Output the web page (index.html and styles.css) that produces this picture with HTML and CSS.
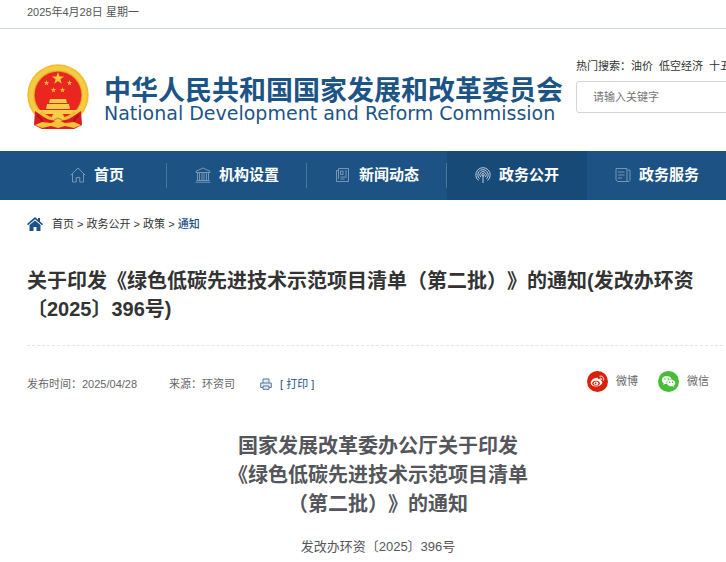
FILE: index.html
```html
<!DOCTYPE html>
<html lang="zh-CN">
<head>
<meta charset="utf-8">
<meta name="viewport" content="width=device-width, initial-scale=1">
<title>通知</title>
<link rel="stylesheet" href="styles.css">
</head>
<body>
<div class="topbar">2025年4月28日 星期一</div>

<header class="header">
  <a class="logo" href="#">
    <svg class="emblem" viewBox="0 0 62 66" aria-hidden="true">
      <circle cx="31" cy="31" r="30.7" fill="#f0bd2d"/>
      <circle cx="31" cy="31" r="27" fill="none" stroke="#f5cb45" stroke-width="4"/>
      <circle cx="31" cy="31" r="24" fill="#d69a25"/>
      <circle cx="31" cy="31" r="23.3" fill="#e92720"/>
      <path d="M31 8l1.500 4.400h4.600l-3.700 2.800 1.400 4.500L31 17l-3.800 2.700 1.400-4.500-3.700-2.800h4.600z" fill="#f9ca3e"/>
      <g fill="#f5b53a">
        <path id="star" d="M19.500 16l.7 2h2.100l-1.700 1.300.6 2.100-1.700-1.200-1.700 1.200.6-2.100-1.700-1.300h2.100z"/>
        <use href="#star" x="23"/><use href="#star" x="7" y="7"/><use href="#star" x="16" y="7"/>
      </g>
      <path d="M23 35h16l1 4H22zM20 40h22l1 5H19zM11 46h40l-4 4H15z" fill="#f9cd46"/>
      <path d="M8 47l9 6 14-2 14 2 9-6 1 14-8 4H15l-8-4z" fill="#d91c20"/>
      <path d="M10 51l5 5-2 7M52 51l-5 5 2 7" fill="none" stroke="#a91119" stroke-width="1.500"/>
      <path d="M14 48c5 6 9 7 17 7s12-1 17-7" fill="none" stroke="#f2bd35" stroke-width="3"/>
      <path d="M8 61l7-3 9 1 7-3 7 3 9-1 7 3-7 3-9-2-7 2-7-2-9 2z" fill="#f3c13a"/>
      <ellipse cx="31" cy="53" rx="6" ry="4.500" fill="#f7ce4c"/>
      <path d="M27 56l4-2 4 2" fill="none" stroke="#d9982a" stroke-width="1.500"/>
    </svg>
    <span class="logo-text">
      <span class="logo-zh">中华人民共和国国家发展和改革委员会</span>
      <span class="logo-en" lang="en">National Development and Reform Commission</span>
    </span>
  </a>
  <form class="search">
    <div class="hot">
      <span>热门搜索：</span><a href="#">油价</a><a href="#">低空经济</a><a href="#">十五五</a>
    </div>
    <input class="search-input" type="text" placeholder="请输入关键字" aria-label="请输入关键字">
  </form>
</header>

<nav class="nav">
  <a class="nav-item" href="#">
    <svg class="nav-icon" viewBox="0 0 16 16"><path d="M.7 8.300L8 1l7.300 7.300M2.500 7v8h3.700v-4.500h3.600V15h3.700V7"/></svg>首页</a>
  <a class="nav-item" href="#">
    <svg class="nav-icon" viewBox="0 0 16 16"><path d="M1 5.500V4.300L8 1l7 3.300v1.200zM2.500 6v7M4.500 6v7M7 6v7M9 6v7M11.500 6v7M13.500 6v7M1.500 13.500h13M.5 15.200h15"/></svg>机构设置</a>
  <a class="nav-item" href="#">
    <svg class="nav-icon" viewBox="0 0 16 16"><path d="M3.500 1.500h10v13h-12v-11h2M3.500 1.500V12M5.500 4H8v3.500H5.500zM10 4h2M10 6h2M10 8h2M5.500 10H12M5.500 12h4"/></svg>新闻动态</a>
  <a class="nav-item active" href="#">
    <svg class="nav-icon" viewBox="0 0 16 16"><path d="M3.500 13.500a7.200 7.200 0 1 1 9 0M4.500 11.700a5.200 5.200 0 1 1 7 0M5.700 10a3.200 3.200 0 1 1 4.600 0M8 8v8"/><circle cx="8" cy="7.800" r="1.300"/></svg>政务公开</a>
  <a class="nav-item" href="#">
    <svg class="nav-icon" viewBox="0 0 16 16"><path d="M1 3V1.500h11v13H2.500L1 13zM12.500 3H15v10.500l-1 1h-2M3 5h6.500M3 8h6.500M3 11h4"/></svg>政务服务</a>
</nav>

<main class="main">
  <div class="crumbs">
    <svg class="home" viewBox="0 0 16 14" aria-hidden="true"><path d="M8 0l3 2.700V1h2v3.500L16 7l-1 1.200L8 2.300 1 8.200 0 7z"/><path d="M8 3.500l5.500 4.600V14H9.500v-4h-3v4h-4V8.100z"/></svg>
    <div><a href="#">首页</a> &gt; <a href="#">政务公开</a> &gt; <a href="#">政策</a> &gt; <a class="current" href="#">通知</a></div>
  </div>

  <h1 class="title">关于印发《绿色低碳先进技术示范项目清单（第二批）》的通知(发改办环资〔2025〕396号)</h1>

  <div class="meta">
    <span class="date">发布时间：2025/04/28</span>
    <span class="source">来源：环资司</span>
    <a class="print" href="#">
      <svg class="printer" viewBox="0 0 12 12" aria-hidden="true"><path d="M3 5V1h6v4M3 9.500H.7V5h10.600v4.500H9M3 8h6v3.300H3z" fill="#e4edf6"/></svg>[ 打印 ]</a>
    <div class="share">
      <a href="#">
        <svg class="badge" viewBox="0 0 21 21" aria-hidden="true"><circle cx="10.500" cy="10.500" r="10.500" fill="#d9210a"/><path d="M9 7c1.500-.7 2.600-.2 2.200 1.300 2-.7 3.300.1 2.700 1.500 1.300.5 1.700 1.300 1.300 2.500-.7 2-3.400 3.200-6.200 3.200-3 0-5.300-1.300-5.300-3.500C3.700 10 6.500 6.800 9 7z" fill="#fff"/><ellipse cx="9" cy="12.200" rx="3.800" ry="2.500" fill="#d9210a"/><ellipse cx="9" cy="12.300" rx="2.300" ry="1.900" fill="#fff"/><circle cx="8.600" cy="12.500" r=".9" fill="#d9210a"/><path d="M13 5.200c2.500-.5 4.300 1.500 3.600 4M13.200 7.200c1.200-.2 1.900.6 1.600 1.700" fill="none" stroke="#fff" stroke-linecap="round"/></svg>微博</a>
      <a href="#">
        <svg class="badge" viewBox="0 0 21 21" aria-hidden="true"><circle cx="10.500" cy="10.500" r="10.500" fill="#45bd35"/><path d="M8.700 5c-2.800 0-4.900 1.700-4.900 4 0 1.300.7 2.400 1.800 3.100L5.200 14l2-1.200c3.500.8 6.500-1 6.500-3.800 0-2.300-2.200-4-5-4z" fill="#fff"/><path d="M13 8.500c2.500 0 4.500 1.500 4.500 3.500 0 1.200-.6 2.100-1.600 2.800l.4 1.600-1.900-1c-3.200.6-5.700-.9-5.700-3.400 0-2 1.900-3.500 4.300-3.500z" fill="#fff" stroke="#45bd35" stroke-width=".5"/><g fill="#45bd35"><circle cx="7" cy="8" r=".8"/><circle cx="10.300" cy="8" r=".8"/><circle cx="11.600" cy="11.200" r=".7"/><circle cx="14.500" cy="11.200" r=".7"/></g></svg>微信</a>
    </div>
  </div>

  <article class="article">
    <h2>国家发展改革委办公厅关于印发<br>《绿色低碳先进技术示范项目清单<br>（第二批）》的通知</h2>
    <p>发改办环资〔2025〕396号</p>
  </article>
</main>
</body>
</html>
```
FILE: styles.css
```css
* { box-sizing: border-box; }

body {
  margin: 0;
  background: #fff;
  color: #333;
  font: 11px/16px "Liberation Sans", "Noto Sans CJK SC", sans-serif;
  text-spacing-trim: space-all;
}

a { color: inherit; text-decoration: none; }
h1, h2, p { margin: 0; }

.topbar {
  padding: 4px 27px 8px;
  border-bottom: 1px solid #ccd9e6;
  color: #555;
}

.header {
  display: flex;
  gap: 13px;
  height: 122px;
  padding: 29px 0 0 27px;
  overflow: hidden;
}

.logo {
  display: flex;
  flex: none;
  gap: 15px;
  padding-top: 6px;
  color: #1d5486;
}

.emblem { width: 62px; height: 66px; }

.logo-text {
  display: flex;
  flex-direction: column;
  padding-top: 13px;
  white-space: nowrap;
}

.logo-zh {
  font-size: 27px;
  font-weight: 700;
  line-height: 28px;
}

.logo-en {
  font-family: "DejaVu Sans", sans-serif;
  font-size: 19px;
  line-height: 16px;
}

.search { flex: 1; min-width: 150px; }

.hot {
  display: flex;
  gap: 6px;
  margin-bottom: 7px;
  white-space: nowrap;
}

.hot span { margin-right: -6px; }

.search-input {
  width: 100%;
  min-width: 240px;
  height: 32px;
  padding: 0 16px;
  border: 1px solid #d5d5d5;
  border-radius: 3px;
  color: #555;
  font: inherit;
}

.search-input::placeholder { color: #757575; }

.nav {
  display: flex;
  height: 49px;
  padding-left: 27px;
  overflow: hidden;
  background: #1d5384;
}

.nav-item {
  position: relative;
  display: flex;
  flex: 0 0 140px;
  align-items: center;
  justify-content: center;
  gap: 8px;
  padding-bottom: 2px;
  color: #fff;
  font-size: 15px;
  font-weight: 700;
}

.nav-item::after {
  content: "";
  position: absolute;
  top: 12px;
  right: 0;
  width: 1px;
  height: 25px;
  background: #4a759d;
}

.nav-item.active { background: #184a77; }
.nav-item.active::after { display: none; }

.nav-icon {
  width: 16px;
  height: 16px;
  fill: none;
  stroke: #7796b4;
}

.active .nav-icon { stroke: #bccbd9; }

.main { padding-left: 27px; }

.crumbs {
  display: flex;
  align-items: center;
  gap: 9px;
  padding-top: 16px;
}

.home { width: 16px; height: 14px; fill: #1d5384; }
.current { color: #1d5384; font-weight: 500; }

.title {
  margin-right: 3px;
  padding: 35px 0 22px;
  border-bottom: 1px dashed #e5e5e5;
  font-size: 20px;
  line-height: 28px;
}

.meta {
  display: flex;
  align-items: center;
  height: 72px;
  padding: 4px 17px 0 0;
  color: #666;
}

.source { margin: 0 25px 0 32px; }

.print {
  display: flex;
  align-items: center;
  gap: 8px;
  color: #1d5384;
}

.printer { width: 12px; height: 12px; stroke: #52799f; }

.share {
  display: flex;
  gap: 20px;
  margin-left: auto;
  padding-bottom: 6px;
}

.share a { display: flex; align-items: center; gap: 8px; }
.badge { width: 21px; height: 21px; }

.article {
  padding: 14px 0 7px 3px;
  color: #54565b;
  text-align: center;
}

.article h2 { font-size: 20px; line-height: 29px; }

.article p {
  padding-top: 18px;
  font-size: 13px;
  line-height: 20px;
}
```
